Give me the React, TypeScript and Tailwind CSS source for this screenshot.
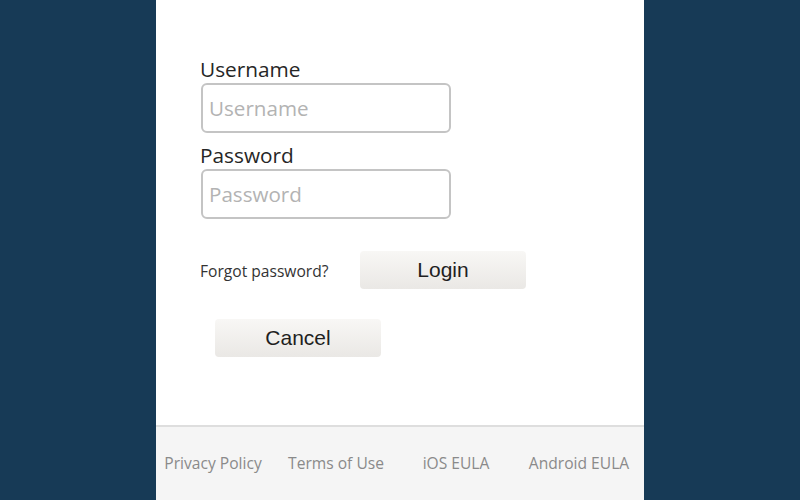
import React from "react";

export default function App() {
  return (
    <div className="w-[800px] h-[500px] bg-[#173a56] flex justify-center overflow-hidden">
      <div className="w-[488px] h-full bg-white flex flex-col" style={{ fontFamily: '"Open Sans", sans-serif' }}>
        <div className="flex-1 pl-[44px] pt-[57px]">
          <div className="text-[20.8px] leading-[24px] text-[#262626]">Username</div>
          <div className="mt-[2px] ml-[1px] w-[250px] h-[50px] border-2 border-[#c4c4c4] rounded-[6px] flex items-center pl-[6px] text-[20.6px] text-[#b3b3b3]">
            Username
          </div>
          <div className="mt-[10px] text-[20.8px] leading-[24px] text-[#262626]">Password</div>
          <div className="mt-[2px] ml-[1px] w-[250px] h-[50px] border-2 border-[#c4c4c4] rounded-[6px] flex items-center pl-[6px] text-[20.6px] text-[#b3b3b3]">
            Password
          </div>
          <div className="mt-[32px] flex items-center">
            <div className="text-[15.6px] text-[#333] w-[160px] pt-[3px]">Forgot password?</div>
            <div
              className="w-[166px] h-[38px] rounded-[4px] bg-gradient-to-b from-[#f8f7f5] to-[#eae8e5] flex items-center justify-center text-[21px] text-[#1f1f1f]"
              style={{ fontFamily: '"Liberation Sans", Arial, sans-serif' }}
            >
              Login
            </div>
          </div>
          <div
            className="mt-[30px] ml-[15px] w-[166px] h-[38px] rounded-[4px] bg-gradient-to-b from-[#f8f7f5] to-[#eae8e5] flex items-center justify-center text-[21px] text-[#1f1f1f]"
            style={{ fontFamily: '"Liberation Sans", Arial, sans-serif' }}
          >
            Cancel
          </div>
        </div>
        <div className="h-[75px] bg-[#f5f5f5] border-t-2 border-[#dedede] grid grid-cols-4 items-center pr-2 text-[15.6px] text-[#8a8a8a]">
          <div className="text-center pr-[6px]">Privacy Policy</div>
          <div className="text-center">Terms of Use</div>
          <div className="text-center">iOS EULA</div>
          <div className="text-center pl-[6px]">Android EULA</div>
        </div>
      </div>
    </div>
  );
}
